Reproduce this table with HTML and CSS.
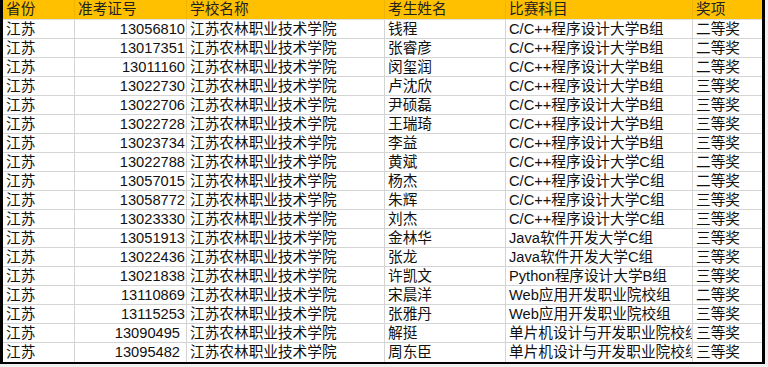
FILE: index.html
```html
<!DOCTYPE html>
<html lang="zh-CN">
<head>
<meta charset="utf-8">
<title>获奖名单</title>
<link rel="stylesheet" href="styles.css">
</head>
<body>
<div class="sheet">
  <div class="row head">
    <div class="c">省份</div><div class="c">准考证号</div><div class="c">学校名称</div><div class="c">考生姓名</div><div class="c">比赛科目</div><div class="c">奖项</div>
  </div>
  <div class="row"><div class="c">江苏</div><div class="c num">13056810</div><div class="c">江苏农林职业技术学院</div><div class="c">钱程</div><div class="c">C/C++程序设计大学B组</div><div class="c">二等奖</div></div>
  <div class="row"><div class="c">江苏</div><div class="c num">13017351</div><div class="c">江苏农林职业技术学院</div><div class="c">张睿彦</div><div class="c">C/C++程序设计大学B组</div><div class="c">二等奖</div></div>
  <div class="row"><div class="c">江苏</div><div class="c num">13011160</div><div class="c">江苏农林职业技术学院</div><div class="c">闵玺润</div><div class="c">C/C++程序设计大学B组</div><div class="c">二等奖</div></div>
  <div class="row"><div class="c">江苏</div><div class="c num">13022730</div><div class="c">江苏农林职业技术学院</div><div class="c">卢沈欣</div><div class="c">C/C++程序设计大学B组</div><div class="c">三等奖</div></div>
  <div class="row"><div class="c">江苏</div><div class="c num">13022706</div><div class="c">江苏农林职业技术学院</div><div class="c">尹硕磊</div><div class="c">C/C++程序设计大学B组</div><div class="c">三等奖</div></div>
  <div class="row"><div class="c">江苏</div><div class="c num">13022728</div><div class="c">江苏农林职业技术学院</div><div class="c">王瑞琦</div><div class="c">C/C++程序设计大学B组</div><div class="c">三等奖</div></div>
  <div class="row"><div class="c">江苏</div><div class="c num">13023734</div><div class="c">江苏农林职业技术学院</div><div class="c">李益</div><div class="c">C/C++程序设计大学B组</div><div class="c">三等奖</div></div>
  <div class="row"><div class="c">江苏</div><div class="c num">13022788</div><div class="c">江苏农林职业技术学院</div><div class="c">黄斌</div><div class="c">C/C++程序设计大学C组</div><div class="c">二等奖</div></div>
  <div class="row"><div class="c">江苏</div><div class="c num">13057015</div><div class="c">江苏农林职业技术学院</div><div class="c">杨杰</div><div class="c">C/C++程序设计大学C组</div><div class="c">二等奖</div></div>
  <div class="row"><div class="c">江苏</div><div class="c num">13058772</div><div class="c">江苏农林职业技术学院</div><div class="c">朱辉</div><div class="c">C/C++程序设计大学C组</div><div class="c">三等奖</div></div>
  <div class="row"><div class="c">江苏</div><div class="c num">13023330</div><div class="c">江苏农林职业技术学院</div><div class="c">刘杰</div><div class="c">C/C++程序设计大学C组</div><div class="c">三等奖</div></div>
  <div class="row"><div class="c">江苏</div><div class="c num">13051913</div><div class="c">江苏农林职业技术学院</div><div class="c">金林华</div><div class="c">Java软件开发大学C组</div><div class="c">三等奖</div></div>
  <div class="row"><div class="c">江苏</div><div class="c num">13022436</div><div class="c">江苏农林职业技术学院</div><div class="c">张龙</div><div class="c">Java软件开发大学C组</div><div class="c">三等奖</div></div>
  <div class="row"><div class="c">江苏</div><div class="c num">13021838</div><div class="c">江苏农林职业技术学院</div><div class="c">许凯文</div><div class="c">Python程序设计大学B组</div><div class="c">三等奖</div></div>
  <div class="row"><div class="c">江苏</div><div class="c num">13110869</div><div class="c">江苏农林职业技术学院</div><div class="c">宋晨洋</div><div class="c">Web应用开发职业院校组</div><div class="c">二等奖</div></div>
  <div class="row"><div class="c">江苏</div><div class="c num">13115253</div><div class="c">江苏农林职业技术学院</div><div class="c">张雅丹</div><div class="c">Web应用开发职业院校组</div><div class="c">三等奖</div></div>
  <div class="row"><div class="c">江苏</div><div class="c num txt">13090495</div><div class="c">江苏农林职业技术学院</div><div class="c">解挺</div><div class="c">单片机设计与开发职业院校组</div><div class="c">三等奖</div></div>
  <div class="row last"><div class="c">江苏</div><div class="c num txt">13095482</div><div class="c">江苏农林职业技术学院</div><div class="c">周东臣</div><div class="c">单片机设计与开发职业院校组</div><div class="c">三等奖</div></div>
</div>
</body>
</html>
```
FILE: styles.css
```css
html, body {
  margin: 0;
  padding: 0;
  background: #f0f0f0;
}
body {
  font-family: "Liberation Sans", "Noto Sans CJK SC", sans-serif;
  font-size: 14.67px;
  color: #111;
}
.sheet {
  width: 759px;
  border-left: 3px solid #000;
  border-right: 3px solid #000;
  border-bottom: 2px solid #000;
  background: #fff;
}
.row {
  box-sizing: border-box;
  display: grid;
  grid-template-columns: 72px 112px 198px 121px 187px 1fr;
  height: 19px;
  border-bottom: 1px solid #d4d4d4;
}
.row.head {
  height: 20px;
  background: #ffc000;
  border-bottom: 1px solid #e0e0e0;
  color: #222;
}
.row.last {
  border-bottom: none;
}
.c {
  border-right: 1px solid #d4d4d4;
  padding: 0 3px;
  line-height: 18px;
  white-space: nowrap;
  overflow: hidden;
}
.head .c {
  line-height: 19px;
  border-right-color: #f0b400;
}
.c:last-child {
  border-right: none;
}
.num {
  text-align: right;
  padding-right: 1px;
}
.num.txt {
  padding-right: 6px;
}
```
